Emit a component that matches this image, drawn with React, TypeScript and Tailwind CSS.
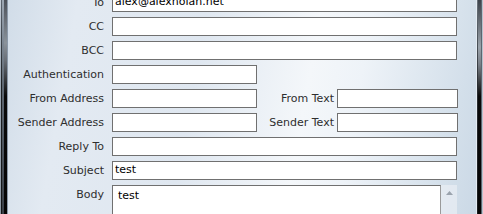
import React from "react";

const font = { fontFamily: '"DejaVu Sans", Verdana, sans-serif' };

function Box({ w, value }: { w?: string; value?: string }) {
  return (
    <div
      className={`h-[19px] border border-[#707070] bg-white flex items-center pl-[2px] text-[11px] text-black ${w ?? "w-[345px]"}`}
    >
      {value}
    </div>
  );
}

function Label({ text, w }: { text: string; w?: string }) {
  return (
    <div className={`text-right text-[11px] text-[#2e2e2e] leading-[19px] whitespace-nowrap ${w ?? "w-[96px] mr-[8px]"}`}>
      {text}
    </div>
  );
}

function Row({ label, value, first }: { label: string; value?: string; first?: boolean }) {
  return (
    <div className={`flex items-center ${first ? "-mt-[7px]" : "mt-[5px]"}`}>
      <Label text={label} />
      <Box value={value} />
    </div>
  );
}

export default function App() {
  return (
    <div
      className="w-[483px] h-[214px] overflow-hidden flex bg-[linear-gradient(100deg,#cfdbe7_0%,#e3eaf2_15%,#dfe7f0_40%,#f4f7fa_62%,#eef3f8_72%,#d3dfea_92%,#c9d7e5_100%)]"
      style={font}
    >
      {/* left frame */}
      <div className="flex h-full">
        <div className="w-[1px] bg-[linear-gradient(180deg,#c3ccd6_0%,#9aa6b2_40%,#8d98a4_100%)]" />
        <div className="w-[1px] bg-[linear-gradient(180deg,#5b646e_0%,#1c1f22_40%,#121416_100%)]" />
        <div className="w-[2px] bg-[linear-gradient(180deg,#9ba6b2_0%,#5e6873_40%,#3a4048_100%)]" />
        <div className="w-[3px] bg-[linear-gradient(180deg,#4b5058_0%,#8a929a_20%,#6a7078_28%,#0a0a0a_45%,#050505_100%)]" />
        <div className="w-[1px] bg-[#8a98a8]" />
      </div>

      {/* content */}
      <div className="flex-1 flex flex-col">
        <Row label="To" value="alex@alexnolan.net" first />
        <Row label="CC" />
        <Row label="BCC" />
        <div className="flex items-center mt-[5px]">
          <Label text="Authentication" />
          <Box w="w-[145px]" />
        </div>
        <div className="flex items-center mt-[5px]">
          <Label text="From Address" />
          <Box w="w-[145px]" />
          <Label text="From Text" w="w-[77px] mr-[3px]" />
          <Box w="w-[121px]" />
        </div>
        <div className="flex items-center mt-[5px]">
          <Label text="Sender Address" />
          <Box w="w-[145px]" />
          <Label text="Sender Text" w="w-[77px] mr-[3px]" />
          <Box w="w-[121px]" />
        </div>
        <Row label="Reply To" />
        <Row label="Subject" value="test" />
        <div className="flex mt-[5px]">
          <div className="w-[96px] mr-[8px] text-right text-[11px] text-[#2e2e2e] leading-[19px]">Body</div>
          <div className="flex">
            <div className="w-[329px] h-[40px] border border-[#707070] border-r-[#9a9a9a] bg-white pl-[5px] pt-[1px] text-[11px] text-black leading-[17px]">
              test
            </div>
            <div className="w-[16px] h-[40px] bg-[#e9eef3]/70 flex justify-center pt-[6px]">
              <svg width="7" height="4" viewBox="0 0 7 4">
                <path d="M0 4 L3.5 0 L7 4 Z" fill="#9aa3ad" />
              </svg>
            </div>
          </div>
        </div>
      </div>

      {/* right frame */}
      <div className="flex h-full">
        <div className="w-[1px] bg-[#e4ebf2]" />
        <div className="w-[1px] bg-[linear-gradient(180deg,#6a737c_0%,#2a2e33_40%,#1a1d20_100%)]" />
        <div className="w-[3px] bg-[linear-gradient(180deg,#3c424a_0%,#9aa2aa_22%,#7a8088_30%,#0a0a0a_45%,#050505_100%)]" />
        <div className="w-[1px] bg-[#5c6670]" />
        <div className="w-[1px] bg-[#b7c2cd]" />
      </div>
    </div>
  );
}
